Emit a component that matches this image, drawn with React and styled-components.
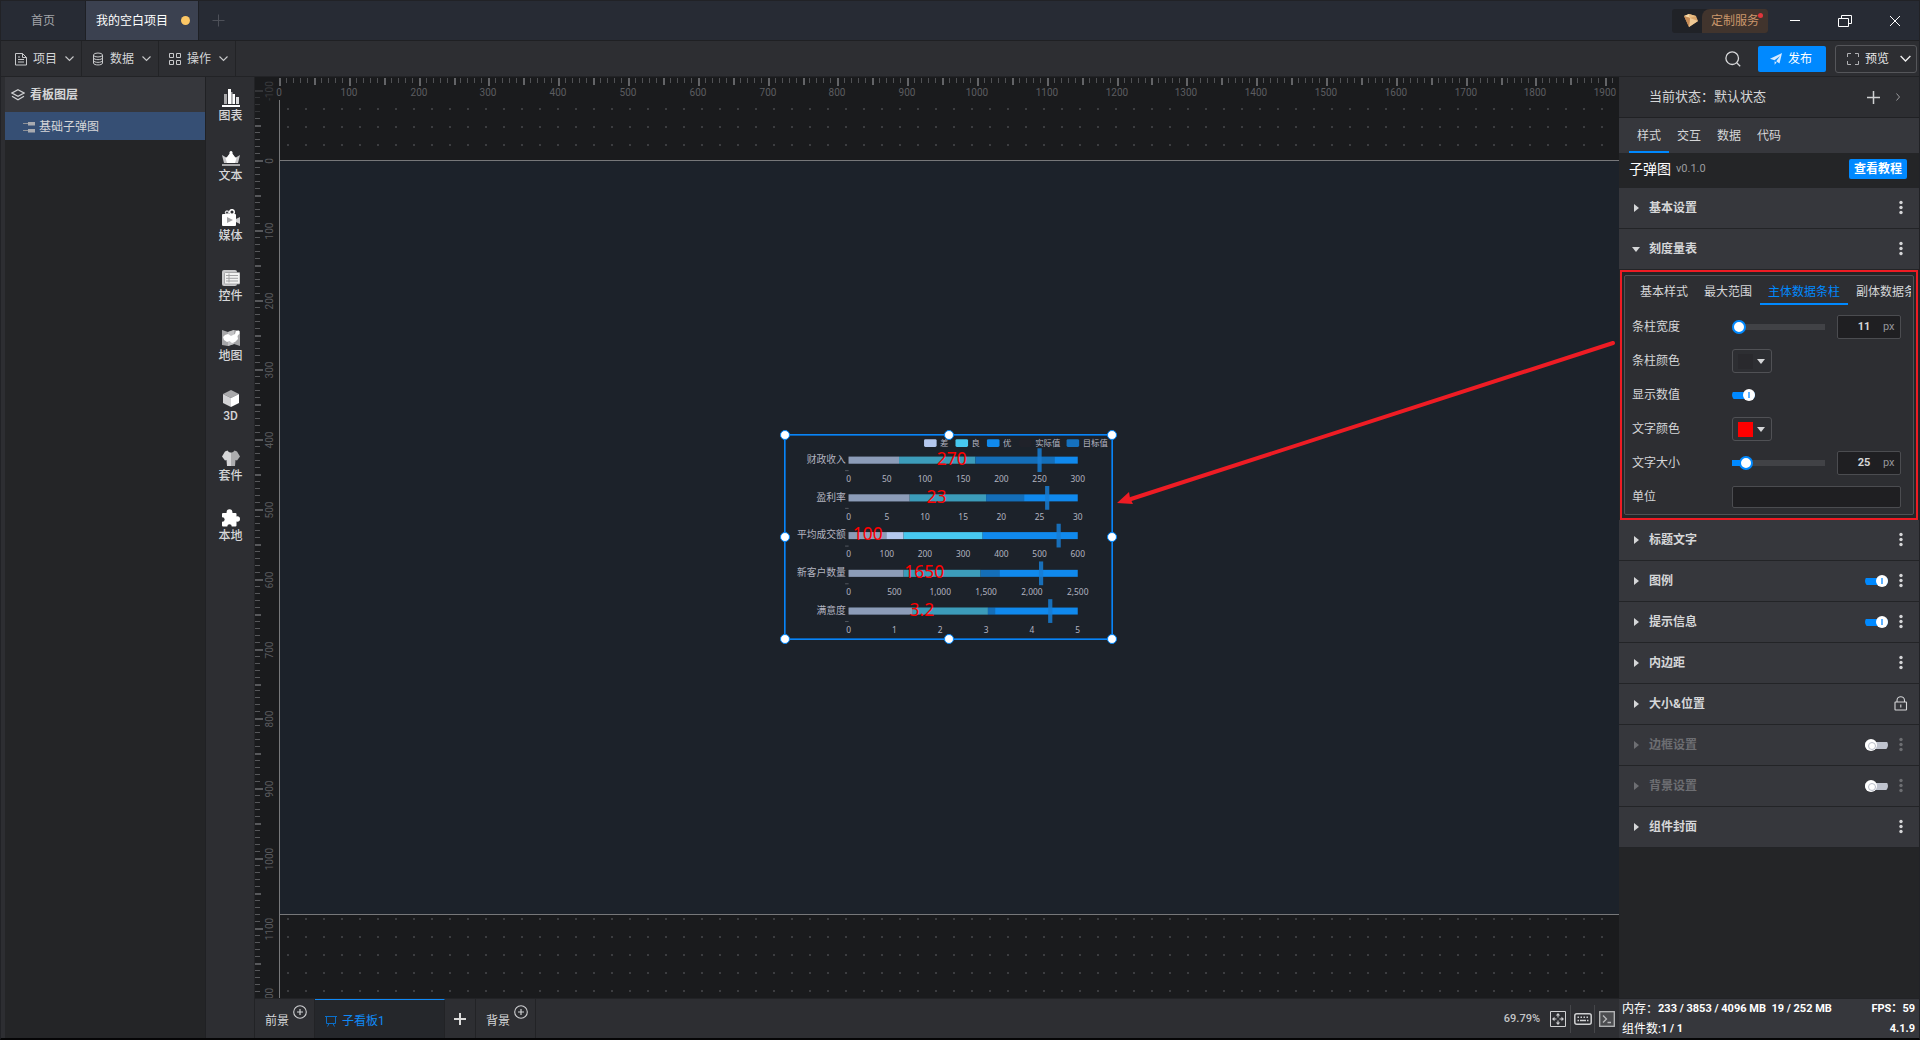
import React, { useState } from 'react';
import styled, { createGlobalStyle, css } from 'styled-components';

const SCALE = 0.698;

const layers = ['基础子弹图'];

const tools = [
  { name: '图表', icon: 'chart' },
  { name: '文本', icon: 'text' },
  { name: '媒体', icon: 'media' },
  { name: '控件', icon: 'widget' },
  { name: '地图', icon: 'map' },
  { name: '3D', icon: 'cube' },
  { name: '套件', icon: 'kit' },
  { name: '本地', icon: 'local' },
];

const sections = [
  { name: '标题文字' },
  { name: '图例', toggle: true },
  { name: '提示信息', toggle: true },
  { name: '内边距' },
  { name: '大小&位置', lock: true },
  { name: '边框设置', toggle: false },
  { name: '背景设置', toggle: false },
  { name: '组件封面' },
];

const bullets = [
  { name: '财政收入', max: 300, step: 50, ranges: [66, 166, 300], actual: 270, target: 250 },
  { name: '盈利率', max: 30, step: 5, ranges: [8, 18, 30], actual: 23, target: 26 },
  { name: '平均成交额', max: 600, step: 100, ranges: [144, 351, 600], actual: 100, target: 550 },
  { name: '新客户数量', max: 2500, step: 500, ranges: [600, 1440, 2500], actual: 1650, target: 2100 },
  { name: '满意度', max: 5, step: 1, ranges: [1.4, 3.04, 5], actual: 3.2, target: 4.4 },
];

const legends = [
  { name: '差', color: '#b4c8ee', x: 199 },
  { name: '良', color: '#47c8f0', x: 244 },
  { name: '优', color: '#1089ed', x: 289 },
  { name: '实际值', color: '#20222a', x: 335 },
  { name: '目标值', color: '#1571bf', x: 403 },
];

const rangeColors = ['#b4c8ee', '#47c8f0', '#1089ed'];

function ToolIcon({ type }) {
  switch (type) {
    case 'chart':
      return (
        <svg width="18" height="18" viewBox="0 0 18 18">
          <path d="M2 5h3v10H2zM9 3h1.500v12H9z" fill="#a9a9ab" />
          <path d="M6 0h3v15H6zM10.500 5H13v10h-2.500z" fill="#fff" />
          <path d="M14 8h3v7h-3z" fill="#dcdcde" />
          <path d="M0 16h18v2H0z" fill="#fff" />
        </svg>
      );
    case 'text':
      return (
        <svg width="18" height="18" viewBox="0 0 18 18">
          <path d="M0 6l5 3 4-7 4 7 5-3-2 8H2z" fill="#c8c8ca" />
          <path d="M9 3l4 5 1.500 1L13 14H5L3.500 9 5 8z" fill="#fff" />
          <circle cx="9" cy="3.500" r="1.500" fill="#fff" />
          <path d="M0 15h18v2H0z" fill="#a9a9ab" />
        </svg>
      );
    case 'media':
      return (
        <svg width="18" height="18" viewBox="0 0 18 18">
          <circle cx="5" cy="3.600" r="1.600" fill="none" stroke="#d4d4d6" strokeWidth="1.300" />
          <circle cx="10" cy="3" r="2.300" fill="none" stroke="#fff" strokeWidth="1.500" />
          <path d="M1 5h12a1 1 0 0 1 1 1v10a1 1 0 0 1-1 1H1a1 1 0 0 1-1-1V6a1 1 0 0 1 1-1z" fill="#fff" />
          <path d="M14 10l4-2v7l-4-2z" fill="#cfcfd1" />
          <path d="M5 8l6 3-6 3z" fill="#a4a4a6" />
        </svg>
      );
    case 'widget':
      return (
        <svg width="18" height="18" viewBox="0 0 18 18">
          <rect x="0" y="1" width="15" height="16" rx="2" fill="#c9c9cb" />
          <rect x="2.500" y="3.500" width="15.500" height="11.500" rx="1" fill="#f2f2f2" stroke="#9b9b9d" strokeWidth="0.800" />
          <path d="M4 6.500h12M4 9.300h12M4 12h12M7 4.500v9" stroke="#a2a2a4" strokeWidth="1" />
        </svg>
      );
    case 'map':
      return (
        <svg width="18" height="18" viewBox="0 0 18 18">
          <path d="M0 1l6 2 6-2 6 1v15l-6-2-6 2-6-1z" fill="#a6a6a8" />
          <path d="M6 3l6-2v14l-6 2z" fill="#c2c2c4" />
          <path d="M1 8l2-2 3-1 3 2 4-2 1-3 3-.5.500 3-2 2.500.5 3-3 3-3 1-2.500-2-2.500 1-3-2z" fill="#fff" />
        </svg>
      );
    case 'cube':
      return (
        <svg width="18" height="18" viewBox="0 0 18 18">
          <path d="M9 1l8 4-8 4-8-4z" fill="#a9a9ab" />
          <path d="M1 5l8 4v9l-8-4z" fill="#d3d3d5" />
          <path d="M17 5l-8 4v9l8-4z" fill="#fff" />
        </svg>
      );
    case 'kit':
      return (
        <svg width="18" height="18" viewBox="0 0 18 18">
          <path d="M5.500 1.500C6.500 3 7.500 3.500 9 3.500V17H5L4.500 11 3 11.500 0 7.500 3 2.500z" fill="#d6d6d8" />
          <path d="M12.500 1.500C11.500 3 10.500 3.500 9 3.500V17h4l.5-6 1.500.5 3-4-3-5z" fill="#acacae" />
        </svg>
      );
    default:
      return (
        <svg width="18" height="18" viewBox="0 0 18 18">
          <rect x="0" y="4" width="14.500" height="13.500" rx="1" fill="#fff" />
          <circle cx="7.500" cy="3.200" r="2.900" fill="#fff" />
          <circle cx="15.300" cy="10" r="2.700" fill="#fff" />
          <circle cx="0.300" cy="10.500" r="2.300" fill="#2d2e32" />
          <circle cx="7.500" cy="17.500" r="2.200" fill="#2d2e32" />
        </svg>
      );
  }
}

const Chevron = ({ size = 9, color = '#c8c9cb' }) => (
  <svg width={size} height={size} viewBox="0 0 9 9" fill="none" stroke={color} strokeWidth="1.100">
    <path d="M0.500 2.500l4 4 4-4" />
  </svg>
);

const MoreIcon = () => (
  <svg width="4" height="16" viewBox="0 0 4 16" fill="currentColor">
    <circle cx="2" cy="2.500" r="1.700" />
    <circle cx="2" cy="7.500" r="1.700" />
    <circle cx="2" cy="12.500" r="1.700" />
  </svg>
);

const LockIcon = () => (
  <svg width="14" height="16" viewBox="0 0 14 16" fill="none" stroke="currentColor" strokeWidth="1.100">
    <rect x="1" y="6" width="11.500" height="8" rx="0.500" />
    <path d="M3 6V4.500c0-5 7.500-5 7.500 0V6M6.800 8.500v3" />
  </svg>
);

const Arrow = ({ open }) => (
  <svg width="8" height="8" viewBox="0 0 8 8" fill="currentColor">
    <path d={open ? 'M0 2h8L4 7z' : 'M2 0l5 4-5 4z'} />
  </svg>
);

const PlusCircle = () => (
  <svg width="14" height="14" viewBox="0 0 14 14" fill="none" stroke="#d0d1d3">
    <circle cx="7" cy="7" r="6.300" strokeWidth="1.100" />
    <path d="M4 7h6M7 4v6" strokeWidth="1.200" />
  </svg>
);

// 横向刻度尺
function HorizontalRuler() {
  const ticks = Array.from({ length: 400 }, (_, i) => i);
  return (
    <HRuler>
      {ticks.map((i) => {
        const x = Math.round(24 + i * 10 * SCALE);
        const len = i % 10 === 0 ? 8 : i % 5 === 0 ? 7 : 5;
        return (
          <rect key={i} x={x} y="1" width={i % 5 === 0 ? 2 : 1} height={len} fill={i % 5 === 0 ? '#636467' : '#505154'} />
        );
      })}
      {ticks.filter((i) => i % 10 === 0 && i <= 190).map((i) => (
        <text key={i} x={Math.round(24 + i * 10 * SCALE)} y="19" textAnchor="middle">{i * 10}</text>
      ))}
    </HRuler>
  );
}

// 纵向刻度尺
function VerticalRuler() {
  const ticks = Array.from({ length: 300 }, (_, i) => i - 10);
  return (
    <VRuler>
      {ticks.map((i) => {
        const y = Math.round(83 + i * 10 * SCALE);
        const len = i % 10 === 0 ? 8 : i % 5 === 0 ? 6 : 5;
        return (
          <rect key={i} x="0" y={y} width={len} height={i % 5 === 0 ? 2 : 1} fill={i < -6 ? '#333437' : '#57585b'} />
        );
      })}
      {ticks.filter((i) => i % 10 === 0 && i <= 120).map((i) => {
        const y = Math.round(84 + i * 10 * SCALE);
        return (
          <text key={i} x="18" y={y} textAnchor="middle" opacity={i < 0 ? 0.5 : 1} transform={`rotate(-90 18 ${y})`}>
            {i * 10}
          </text>
        );
      })}
    </VRuler>
  );
}

function BulletChart() {
  const x0 = 91;
  const width = 328;
  return (
    <ChartSvg viewBox="0 0 468 292">
      {legends.map((item) => (
        <g key={item.name}>
          <rect x={item.x} y="6" width="18" height="11" rx="2" fill={item.color} />
          <text x={item.x + 23} y="16">{item.name}</text>
        </g>
      ))}
      {bullets.map((row, index) => {
        const cy = 36 + index * 54;
        const px = (v) => (v / row.max) * width;
        const labels = [];
        for (let v = 0; v <= row.max; v += row.step) labels.push(v);
        return (
          <g key={row.name}>
            <RowName x="87" y={cy + 4} textAnchor="end">{row.name}</RowName>
            {row.ranges.map((end, i) => {
              const start = i === 0 ? 0 : row.ranges[i - 1];
              return (
                <rect key={end} x={x0 + px(start)} y={cy - 5} width={px(end - start)} height="10" fill={rangeColors[i]} />
              );
            })}
            <rect x={x0} y={cy - 5} width={px(row.actual)} height="10" fill="#23242a" opacity="0.27" />
            <rect x={x0 + px(row.target) - 3} y={cy - 17} width="6" height="34" fill="#177cd2" opacity="0.85" />
            <path d={`M86 ${cy + 15}h5`} stroke="#6b6f78" />
            {labels.map((v) => (
              <text key={v} x={x0 + px(v)} y={cy + 31} textAnchor="middle">{v.toLocaleString('en-US')}</text>
            ))}
            <ValueText x={x0 + px(row.actual) / 2} y={cy + 7} textAnchor="middle">{row.actual}</ValueText>
          </g>
        );
      })}
    </ChartSvg>
  );
}

function SliderRow({ id, label, min, max, initial }) {
  const [value, setValue] = useState(initial);
  const fill = ((value - min) / (max - min)) * 100;
  return (
    <FormRow>
      <FormLabel htmlFor={id}>{label}</FormLabel>
      <FormControl>
        <Slider
          id={id}
          type="range"
          min={min}
          max={max}
          value={value}
          style={{ '--fill': `${fill}%` }}
          onChange={(e) => setValue(Number(e.target.value))}
        />
        <NumberBox>
          <input
            type="text"
            aria-label={`${label} px`}
            value={value}
            onChange={(e) => setValue(Number(e.target.value) || 0)}
          />
          <span>px</span>
        </NumberBox>
      </FormControl>
    </FormRow>
  );
}

function ColorRow({ id, label, color }) {
  return (
    <FormRow>
      <FormLabel htmlFor={id}>{label}</FormLabel>
      <FormControl>
        <ColorButton id={id} type="button">
          <Swatch $color={color} />
          <Arrow open />
        </ColorButton>
      </FormControl>
    </FormRow>
  );
}

function Section({ item, open }) {
  const [checked, setChecked] = useState(item.toggle);
  return (
    <SectionHead $muted={item.toggle === false}>
      <SectionName type="button" aria-expanded={Boolean(open)}>
        <Arrow open={open} />
        {item.name}
      </SectionName>
      <SectionTools>
        {item.toggle !== undefined && (
          <Switch
            type="checkbox"
            aria-label={item.name}
            checked={checked}
            onChange={() => setChecked(!checked)}
          />
        )}
        <IconButton type="button" aria-label={`${item.name} ${item.lock ? '锁定' : '更多'}`}>
          {item.lock ? <LockIcon /> : <MoreIcon />}
        </IconButton>
      </SectionTools>
    </SectionHead>
  );
}

function App() {
  const [showValue, setShowValue] = useState(true);
  const [unit, setUnit] = useState('');

  return (
    <>
      <GlobalStyle />
      <Window>
        <TitleBar>
          <HomeTab type="button">首页</HomeTab>
          <ProjectTab type="button">
            我的空白项目
            <UnsavedDot />
          </ProjectTab>
          <AddTab type="button" aria-label="新建">
            <svg width="13" height="13" viewBox="0 0 13 13" stroke="#4d5058" fill="none">
              <path d="M0.500 6.500h12M6.500 0.500v12" />
            </svg>
          </AddTab>
          <Spacer />
          <CustomService type="button">
            <GemSide>
              <svg width="14" height="14" viewBox="0 0 14 14">
                <path d="M0 2l5-2 7 2 2 5-9 6z" fill="#d9a56c" />
                <path d="M0 2l5-2 1 4z" fill="#f6d9a8" />
                <path d="M5 0l7 2-6 2z" fill="#e9bd82" />
                <path d="M6 4l8 3-9 6z" fill="#efc995" />
                <path d="M0 2l6 2-1 9z" fill="#c58a55" />
              </svg>
            </GemSide>
            <ServiceText>
              定制服务
              <RedDot />
            </ServiceText>
          </CustomService>
          <WindowButton type="button" aria-label="最小化">
            <svg width="14" height="14" viewBox="0 0 14 14" stroke="#fff"><path d="M2 6.500h10" /></svg>
          </WindowButton>
          <WindowButton type="button" aria-label="还原">
            <svg width="14" height="14" viewBox="0 0 14 14" stroke="#fff" fill="none">
              <path d="M0.500 4.500h10v8h-10zM3.500 4.500v-3h10v8h-3" />
            </svg>
          </WindowButton>
          <WindowButton type="button" aria-label="关闭">
            <svg width="14" height="14" viewBox="0 0 14 14" stroke="#fff"><path d="M2 2l10 10M12 2L2 12" /></svg>
          </WindowButton>
        </TitleBar>

        <ToolBar>
          <MenuButton type="button">
            <svg width="12" height="14" viewBox="0 0 12 14" fill="none" stroke="#c8c9cb">
              <path d="M0.500 1.500h7l4 4v7.500h-11zM7.500 1.500v4h4M3 7.500h6M3 10h6M3 5h2" />
            </svg>
            <span>项目</span>
            <Chevron />
          </MenuButton>
          <MenuButton type="button">
            <svg width="12" height="14" viewBox="0 0 12 14" fill="none" stroke="#c8c9cb">
              <ellipse cx="6" cy="3" rx="4.500" ry="2" />
              <path d="M1.500 3v8c0 2.600 9 2.600 9 0V3M1.500 5.700c0 2.600 9 2.600 9 0M1.500 8.400c0 2.600 9 2.600 9 0" />
            </svg>
            <span>数据</span>
            <Chevron />
          </MenuButton>
          <MenuButton type="button">
            <svg width="12" height="14" viewBox="0 0 12 14" fill="none" stroke="#c8c9cb">
              <path d="M0.500 1.500h4v4h-4zM7.500 1.500h4v4h-4zM0.500 8.500h4v4h-4zM7.500 8.500h4v4h-4z" />
            </svg>
            <span>操作</span>
            <Chevron />
          </MenuButton>
          <Spacer />
          <SearchButton type="button" aria-label="搜索">
            <svg width="16" height="16" viewBox="0 0 16 16" fill="none" stroke="#d8d9db" strokeWidth="1.300">
              <circle cx="7.200" cy="7.200" r="6.300" />
              <path d="M11.700 11.700l3.500 3.500" />
            </svg>
          </SearchButton>
          <PublishButton type="button">
            <svg width="12" height="12" viewBox="0 0 12 12" fill="#d5e9ff">
              <path d="M12 0L9.500 10.500 6.200 8.300 10 3 4.500 7.300 0 5.800z" />
              <path d="M4.600 8.200l2 1.400-2 2.200z" />
            </svg>
            发布
          </PublishButton>
          <PreviewButton type="button">
            <svg width="12" height="12" viewBox="0 0 12 12" fill="none" stroke="#b0b1b4">
              <path d="M0.500 4V0.500H4M8 0.500h3.500V4M11.500 8v3.500H8M4 11.500H0.500V8" />
            </svg>
            <span>预览</span>
            <Chevron size={11} color="#f0f0f0" />
          </PreviewButton>
        </ToolBar>

        <Body>
          <LayerPanel>
            <LayerHead>
              <svg width="14" height="12" viewBox="0 0 14 12" fill="none" stroke="#d0d1d3" strokeWidth="1.200">
                <path d="M7 0.700l6 3.300-6 3.300L1 4zM1 7.200l6 3.600 6-3.600" />
              </svg>
              看板图层
            </LayerHead>
            {layers.map((name) => (
              <LayerRow key={name} type="button">
                <svg width="12" height="12" viewBox="0 0 12 12">
                  <path d="M0 2.500h6M0 9.500h6" stroke="#8f9298" />
                  <path d="M5 1h7v3.500H5zM5 8h7v3.500H5z" fill="#a9abb0" />
                </svg>
                {name}
              </LayerRow>
            ))}
          </LayerPanel>

          <SideTools>
            {tools.map((tool) => (
              <ToolButton key={tool.name} type="button">
                <ToolIcon type={tool.icon} />
                {tool.name}
              </ToolButton>
            ))}
          </SideTools>

          <Center>
            <Stage>
              <VerticalRuler />
              <HorizontalRuler />
              <Canvas>
                <Board />
                <Selected>
                  <BulletChart />
                  {[[0, 0], [50, 0], [100, 0], [0, 50], [100, 50], [0, 100], [50, 100], [100, 100]].map(([x, y]) => (
                    <Handle key={`${x}-${y}`} $x={x} $y={y} />
                  ))}
                </Selected>
                <PointerArrow viewBox="0 0 500 170">
                  <path d="M496 4L14 160" stroke="#ee1c24" strokeWidth="4" strokeLinecap="round" />
                  <path d="M0 164l12-11 1 6 3 6z" fill="#ee1c24" />
                </PointerArrow>
              </Canvas>
            </Stage>
            <BottomBar>
              <SheetTab type="button">
                前景
                <PlusCircle />
              </SheetTab>
              <ActiveSheet type="button">
                <svg width="12" height="12" viewBox="0 0 12 12" fill="none" stroke="#0a6fc9">
                  <path d="M0 1.500h12M1.500 1.500v7h9v-7M4 8.500l-1.500 3M8 8.500l1.500 3" />
                </svg>
                子看板1
              </ActiveSheet>
              <AddSheet type="button" aria-label="添加看板">
                <svg width="12" height="12" viewBox="0 0 12 12" stroke="#dcdcdc" strokeWidth="2"><path d="M0 6h12M6 0v12" /></svg>
              </AddSheet>
              <SheetTab type="button">
                背景
                <PlusCircle />
              </SheetTab>
              <Spacer />
              <Zoom>69.79%</Zoom>
              <BarIcon type="button" aria-label="适应画布">
                <svg width="16" height="16" viewBox="0 0 16 16" fill="none" stroke="#cfd0d2">
                  <path d="M0.500 0.500h15v15h-15z" />
                  <path d="M8 3v3.500M8 9.500V13M3 8h3.500M9.500 8H13" />
                  <path d="M5.800 4.500h4.400L8 2zM5.800 11.500h4.400L8 14zM4.500 5.800v4.400L2 8zM11.500 5.800v4.400L14 8z" fill="#cfd0d2" stroke="none" />
                </svg>
              </BarIcon>
              <BarIcon type="button" aria-label="快捷键">
                <svg width="18" height="12" viewBox="0 0 18 12" fill="none" stroke="#cfd0d2" strokeWidth="1.500">
                  <rect x="0.800" y="0.800" width="16.400" height="10.400" rx="2" />
                  <path d="M3.500 4.200h11" strokeDasharray="1.500 1.500" />
                  <path d="M3.500 7.500h1.500M6 7.500h6M13 7.500h1.500" />
                </svg>
              </BarIcon>
              <BarIcon type="button" aria-label="控制台">
                <svg width="16" height="16" viewBox="0 0 16 16" fill="none" stroke="#b8b9bb" strokeWidth="1.300">
                  <rect x="0.700" y="0.700" width="14.600" height="14.600" fill="#4c4d50" />
                  <path d="M4 4.500l3.500 3.500L4 11.500M8.500 11.500H12" />
                </svg>
              </BarIcon>
            </BottomBar>
          </Center>

          <Inspector>
            <StateRow>
              当前状态：默认状态
              <Spacer />
              <IconButton type="button" aria-label="添加状态">
                <svg width="13" height="13" viewBox="0 0 13 13" stroke="#d0d1d3" strokeWidth="1.500"><path d="M0 6.500h13M6.500 0v13" /></svg>
              </IconButton>
              <IconButton type="button" aria-label="展开">
                <svg width="4" height="8" viewBox="0 0 4 8" fill="none" stroke="#9a9b9e"><path d="M0.500 0.500l3 3.500-3 3.500" /></svg>
              </IconButton>
            </StateRow>
            <TabRow>
              {['样式', '交互', '数据', '代码'].map((tab, i) => (
                <Tab key={tab} type="button" $active={i === 0}>{tab}</Tab>
              ))}
            </TabRow>
            <ComponentRow>
              子弹图
              <Version>v0.1.0</Version>
              <Spacer />
              <TutorialButton type="button">查看教程</TutorialButton>
            </ComponentRow>
            <Section item={{ name: '基本设置' }} />
            <Section item={{ name: '刻度量表' }} open />
            <Highlight>
              <FormPanel>
                <SubTabs>
                  {['基本样式', '最大范围', '主体数据条柱', '副体数据条柱'].map((tab, i) => (
                    <SubTab key={tab} type="button" $active={i === 2}>{tab}</SubTab>
                  ))}
                </SubTabs>
                <SliderRow id="bar-width" label="条柱宽度" min={11} max={100} initial={11} />
                <ColorRow id="bar-color" label="条柱颜色" color="#29292d" />
                <FormRow>
                  <FormLabel htmlFor="show-value">显示数值</FormLabel>
                  <FormControl>
                    <Switch id="show-value" type="checkbox" checked={showValue} onChange={() => setShowValue(!showValue)} />
                  </FormControl>
                </FormRow>
                <ColorRow id="text-color" label="文字颜色" color="#ff0000" />
                <SliderRow id="text-size" label="文字大小" min={12} max={156} initial={25} />
                <FormRow>
                  <FormLabel htmlFor="unit">单位</FormLabel>
                  <FormControl>
                    <UnitInput id="unit" type="text" value={unit} onChange={(e) => setUnit(e.target.value)} />
                  </FormControl>
                </FormRow>
              </FormPanel>
            </Highlight>
            {sections.map((item) => (
              <Section key={item.name} item={item} />
            ))}
            <Spacer />
            <Status>
              <StatusLine>
                <span>内存：</span>
                <StatusNumber>233 / 3853 / 4096 MB&nbsp; 19 / 252 MB</StatusNumber>
                <Spacer />
                <StatusNumber>FPS：</StatusNumber>
                <StatusNumber>59</StatusNumber>
              </StatusLine>
              <StatusLine>
                <span>组件数:</span>
                <StatusNumber>1 / 1</StatusNumber>
                <Spacer />
                <StatusNumber>4.1.9</StatusNumber>
              </StatusLine>
            </Status>
          </Inspector>
        </Body>
      </Window>
    </>
  );
}

const GlobalStyle = createGlobalStyle`
* {
  box-sizing: border-box;
}
body {
  margin: 0;
  background: #000;
  color: #d5d6d8;
  font-family: Roboto, 'Noto Sans CJK SC', sans-serif;
  font-size: 12px;
  line-height: 16px;
}
button, input {
  margin: 0;
  padding: 0;
  border: none;
  background: none;
  color: inherit;
  font: inherit;
}
svg {
  display: block;
  flex-shrink: 0;
}
`;

const Window = styled.div`
display: flex;
flex-direction: column;
min-height: 100vh;
border: 1px solid #212226;
border-bottom: 2px solid #050506;
background: #242527;
`;

const Spacer = styled.div`
flex: 1;
`;

const TitleBar = styled.header`
display: flex;
align-items: center;
height: 40px;
padding-right: 3px;
background: #272b34;
border-bottom: 1px solid #1f2023;
`;

const HomeTab = styled.button`
width: 85px;
height: 39px;
color: #a3a5a9;
border-right: 1px solid #1e2025;
`;

const ProjectTab = styled.button`
display: flex;
align-items: center;
justify-content: space-between;
width: 113px;
height: 39px;
padding: 0 8px 0 10px;
color: #fff;
background: #3b4150;
border-right: 1px solid #1e2025;
`;

const UnsavedDot = styled.i`
width: 9px;
height: 9px;
border-radius: 50%;
background: #fdc765;
`;

const AddTab = styled.button`
margin-left: 13px;
`;

const CustomService = styled.button`
display: flex;
height: 24px;
margin-right: 6px;
border-radius: 3px;
background: #202227;
`;

const GemSide = styled.span`
display: flex;
align-items: center;
justify-content: center;
width: 30px;
padding-left: 8px;
`;

const ServiceText = styled.span`
position: relative;
width: 66px;
line-height: 24px;
color: #cb976c;
text-align: center;
background: #41342d;
border-radius: 8px 3px 3px 0;
`;

const RedDot = styled.i`
position: absolute;
top: 4px;
right: 5px;
width: 5px;
height: 5px;
border-radius: 50%;
background: #e0353b;
`;

const WindowButton = styled.button`
display: flex;
align-items: center;
justify-content: center;
width: 42px;
height: 38px;
& + & {
  margin-left: 8px;
}
`;

const ToolBar = styled.nav`
display: flex;
align-items: center;
height: 36px;
padding: 0 2px 0 4px;
background: #2d2e32;
border-bottom: 1px solid #222326;
`;

const MenuButton = styled.button`
display: flex;
align-items: center;
width: 77px;
height: 35px;
padding-left: 10px;
border-right: 1px solid #222326;
span {
  margin: 0 8px 0 6px;
}
`;

const SearchButton = styled.button`
margin-right: 17px;
`;

const PublishButton = styled.button`
display: flex;
align-items: center;
justify-content: center;
gap: 6px;
width: 68px;
height: 26px;
margin-right: 9px;
padding-right: 2px;
color: #fff;
background: #0089ff;
border-radius: 2px;
`;

const PreviewButton = styled.button`
display: flex;
align-items: center;
width: 82px;
height: 28px;
padding-left: 11px;
color: #e8e8e8;
border: 1px solid #55565a;
border-radius: 3px;
span {
  margin: 0 11px 0 6px;
}
`;

const Body = styled.div`
display: flex;
flex: 1;
`;

const LayerPanel = styled.aside`
width: 205px;
padding-left: 4px;
background: linear-gradient(#2d2e32, #2d2e32) 0 0 / 4px 100% no-repeat #242527;
border-right: 1px solid #202124;
`;

const LayerHead = styled.h2`
display: flex;
align-items: center;
gap: 5px;
height: 35px;
margin: 0;
padding-left: 6px;
font-size: 12px;
background: #36373c;
`;

const LayerRow = styled.button`
display: flex;
align-items: center;
gap: 4px;
width: 100%;
height: 28px;
padding: 2px 0 0 18px;
background: #364f74;
`;

const SideTools = styled.nav`
width: 49px;
background: #2d2e32;
border-right: 1px solid #222326;
`;

const ToolButton = styled.button`
display: flex;
flex-direction: column;
align-items: center;
gap: 1px;
width: 100%;
height: 60px;
padding: 12px 0 13px 1px;
font-weight: 500;
`;

const Center = styled.main`
display: flex;
flex-direction: column;
flex: 1;
min-width: 0;
`;

const Stage = styled.section`
display: grid;
grid-template-columns: 24px minmax(0, 1fr);
grid-template-rows: 23px minmax(0, 1fr);
flex: 1;
background: #1a1b1d;
`;

const HRuler = styled.svg`
grid-area: 1 / 1 / 2 / 3;
width: 100%;
height: 23px;
fill: #5c5d60;
font-size: 10px;
`;

const VRuler = styled.svg`
grid-area: 1 / 1 / 3 / 2;
width: 24px;
height: 100%;
fill: #5c5d60;
font-size: 10px;
`;

const Canvas = styled.div`
grid-area: 2 / 2 / 3 / 3;
position: relative;
overflow: hidden;
padding-top: 60px;
border-left: 1px solid #77787a;
background: radial-gradient(circle, #3c3d40 1px, transparent 1px) -1px 0 / 18px 18px;
`;

const Board = styled.div`
height: 755px;
background: #1c222a;
border-top: 1px solid #77787a;
border-bottom: 1px solid #77787a;
`;

const Selected = styled.div`
position: absolute;
left: 504px;
top: 334px;
width: 329px;
height: 206px;
border: 1px solid #0a84f5;
outline: 1px solid #0a5fb0;
outline-offset: -2px;
`;

const ChartSvg = styled.svg`
width: 100%;
height: 100%;
fill: #b3b4c0;
font-family: 'Noto Sans', 'Noto Sans CJK SC', sans-serif;
font-size: 12px;
`;

const RowName = styled.text`
font-size: 14px;
`;

const ValueText = styled.text`
fill: #ff0000;
font-size: 25px;
`;

const Handle = styled.i`
position: absolute;
left: ${(props) => props.$x}%;
top: ${(props) => props.$y}%;
width: 10px;
height: 10px;
border: 1px solid #0089ff;
border-radius: 50%;
background: #fff;
transform: translate(-50%, -50%);
`;

const PointerArrow = styled.svg`
position: absolute;
left: 837px;
top: 239px;
width: 500px;
height: 170px;
`;

const BottomBar = styled.footer`
display: flex;
align-items: center;
height: 40px;
background: #2d2e32;
border-top: 1px solid #222326;
`;

const SheetTab = styled.button`
display: flex;
align-items: center;
gap: 4px;
width: 60px;
height: 39px;
padding-left: 10px;
padding-top: 4px;
border-right: 1px solid #222326;
svg {
  align-self: flex-start;
  margin-top: 2px;
}
`;

const ActiveSheet = styled.button`
display: flex;
align-items: center;
gap: 5px;
width: 130px;
height: 39px;
padding-left: 10px;
padding-top: 3px;
color: #1089f5;
background: #25272b;
border-top: 1px solid #1089f5;
border-right: 1px solid #222326;
`;

const AddSheet = styled.button`
display: flex;
align-items: center;
justify-content: center;
width: 31px;
height: 39px;
border-right: 1px solid #222326;
`;

const Zoom = styled.span`
margin-right: 6px;
font-size: 11px;
font-weight: 500;
color: #c4c5c7;
`;

const BarIcon = styled.button`
display: flex;
align-items: center;
justify-content: center;
width: 24px;
height: 28px;
& + & {
  border-left: 1px solid #45464a;
}
&:last-child {
  margin-right: 1px;
}
`;

const Inspector = styled.aside`
display: flex;
flex-direction: column;
width: 300px;
background: #242527;
`;

const IconButton = styled.button`
display: flex;
align-items: center;
justify-content: center;
width: 14px;
height: 20px;
`;

const StateRow = styled.div`
display: flex;
align-items: center;
gap: 11px;
height: 41px;
padding: 0 14px 0 30px;
font-size: 13px;
background: #2d2e32;
border-bottom: 1px solid #202124;
`;

const TabRow = styled.div`
display: flex;
height: 35px;
padding-left: 10px;
background: #36373c;
`;

const Tab = styled.button`
width: 40px;
padding-top: 3px;
border-bottom: 2px solid ${(props) => (props.$active ? '#0089ff' : 'transparent')};
`;

const ComponentRow = styled.div`
display: flex;
align-items: center;
height: 35px;
padding: 0 12px 3px 10px;
color: #fff;
font-size: 14px;
`;

const Version = styled.small`
margin-left: 5px;
color: #9b9c9f;
font-size: 11px;
`;

const TutorialButton = styled.button`
width: 58px;
height: 20px;
color: #fff;
font-size: 12px;
font-weight: bold;
background: #0089ff;
border-radius: 2px;
`;

const SectionHead = styled.div`
display: flex;
align-items: center;
justify-content: space-between;
height: 41px;
padding: 0 11px 0 13px;
background: #36373c;
border-bottom: 1px solid #232427;
${(props) => props.$muted && css`
color: #6d6e72;
`}
`;

const SectionName = styled.button`
display: flex;
align-items: center;
gap: 9px;
font-weight: bold;
`;

const SectionTools = styled.div`
display: flex;
align-items: center;
gap: 6px;
`;

const Switch = styled.input`
appearance: none;
position: relative;
width: 23px;
height: 12px;
background: linear-gradient(#c0c4cf, #c0c4cf) center / 100% 7px no-repeat;
border-radius: 6px;
&::before {
  content: '';
  position: absolute;
  left: 0;
  top: 0;
  width: 12px;
  height: 12px;
  border-radius: 50%;
  background: #fff;
}
&::after {
  content: '';
  position: absolute;
  left: 3px;
  top: 3px;
  width: 6px;
  height: 6px;
  border: 1px solid #b9bdc8;
  border-radius: 50%;
}
&:checked {
  background-image: linear-gradient(#0089ff, #0089ff);
}
&:checked::before {
  left: 11px;
}
&:checked::after {
  left: 16px;
  width: 2px;
  border: none;
  border-radius: 0;
  background: #5fb2ff;
}
`;

const Highlight = styled.div`
margin: 0 1px;
padding: 3px 2px;
border: 2px solid #ee1c24;
`;

const FormPanel = styled.div`
padding: 0 12px 0 7px;
background: #2d2e32;
border: 1px solid #505155;
border-radius: 2px;
`;

const SubTabs = styled.div`
display: flex;
height: 34px;
margin-right: -10px;
overflow: hidden;
`;

const SubTab = styled.button`
flex-shrink: 0;
height: 29px;
padding: 4px 8px 0;
color: ${(props) => (props.$active ? '#0089ff' : 'inherit')};
border-bottom: 2px solid ${(props) => (props.$active ? '#0089ff' : 'transparent')};
`;

const FormRow = styled.div`
display: flex;
align-items: center;
height: 34px;
`;

const FormLabel = styled.label`
width: 100px;
`;

const FormControl = styled.div`
display: flex;
align-items: center;
justify-content: space-between;
flex: 1;
`;

const Slider = styled.input`
appearance: none;
width: 93px;
height: 14px;
background: linear-gradient(to right, #0089ff var(--fill), #414246 var(--fill)) center / 100% 6px no-repeat;
border-radius: 3px;
&::-webkit-slider-thumb {
  appearance: none;
  width: 14px;
  height: 14px;
  border: 2px solid #0089ff;
  border-radius: 50%;
  background: #fff;
}
`;

const NumberBox = styled.div`
display: flex;
align-items: center;
width: 64px;
height: 24px;
padding: 0 3px 0 7px;
background: #1f1f22;
border: 1px solid #4b4c50;
border-radius: 2px;
font-size: 11px;
input {
  width: 38px;
  text-align: center;
  font-weight: bold;
}
span {
  color: #95969a;
}
`;

const ColorButton = styled.button`
display: flex;
align-items: center;
gap: 4px;
width: 40px;
height: 24px;
padding-left: 5px;
border: 1px solid #505155;
border-radius: 3px;
`;

const Swatch = styled.i`
width: 15px;
height: 15px;
background: ${(props) => props.$color};
`;

const UnitInput = styled.input`
width: 100%;
height: 22px;
padding: 0 6px;
background: #1f1f22;
border: 1px solid #4b4c50;
border-radius: 2px;
`;

const Status = styled.div`
height: 40px;
padding: 0 4px 0 3px;
color: #fff;
background: #36373c;
border-top: 1px solid #222326;
`;

const StatusLine = styled.div`
display: flex;
line-height: 20px;
`;

const StatusNumber = styled.span`
font-size: 11px;
font-weight: bold;
`;

export default App;
